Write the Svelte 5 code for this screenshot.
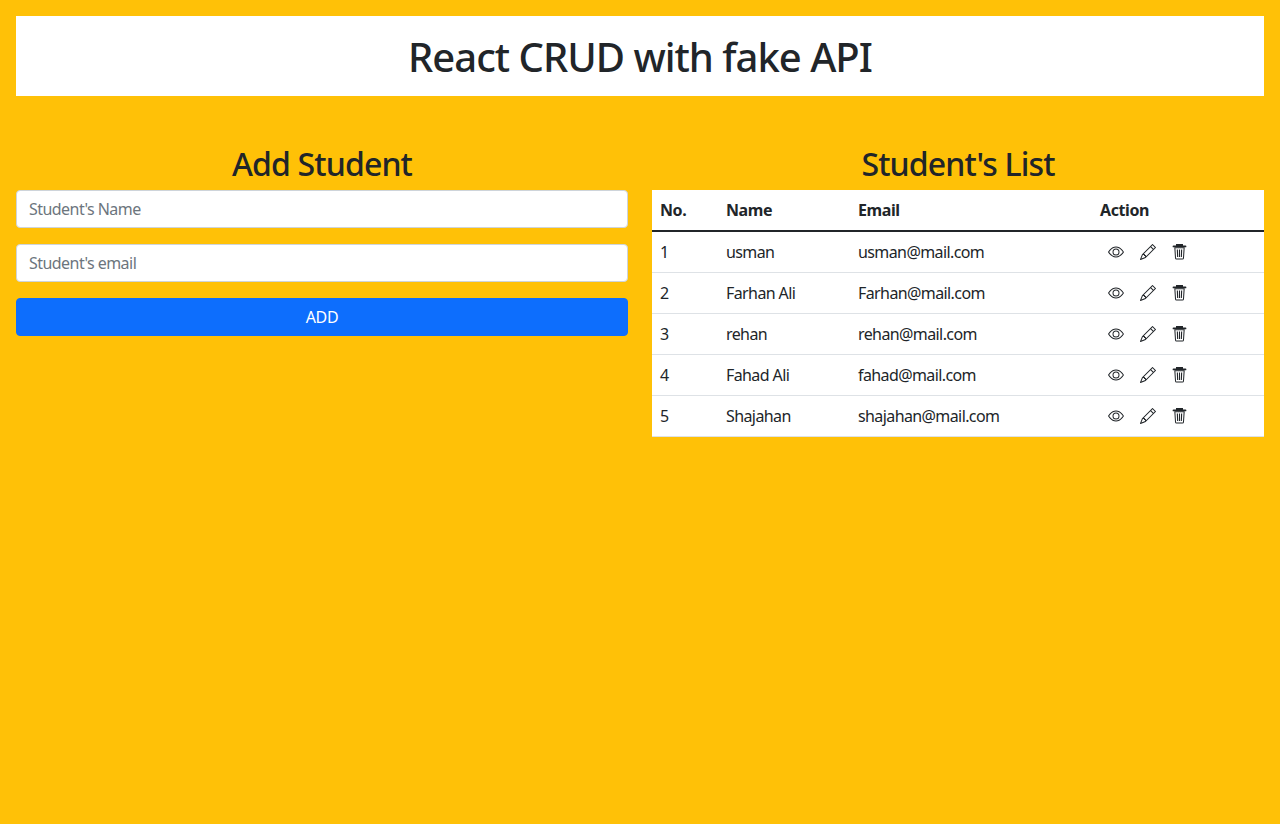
<script>
  const students = [
    { name: 'usman', email: 'usman@mail.com' },
    { name: 'Farhan Ali', email: 'Farhan@mail.com' },
    { name: 'rehan', email: 'rehan@mail.com' },
    { name: 'Fahad Ali', email: 'fahad@mail.com' },
    { name: 'Shajahan', email: 'shajahan@mail.com' }
  ]
</script>

<div class="page">
  <header class="banner"><h1>React CRUD with fake API</h1></header>

  <div class="columns">
    <section>
      <h2>Add Student</h2>
      <form class="form" on:submit|preventDefault>
        <input type="text" placeholder="Student's Name" />
        <input type="email" placeholder="Student's email" />
        <button type="submit">ADD</button>
      </form>
    </section>

    <section>
      <h2>Student's List</h2>
      <table>
        <thead>
          <tr>
            <th class="no">No.</th>
            <th class="name">Name</th>
            <th class="email">Email</th>
            <th>Action</th>
          </tr>
        </thead>
        <tbody>
          {#each students as s, i}
            <tr>
              <td>{i + 1}</td>
              <td>{s.name}</td>
              <td>{s.email}</td>
              <td>
                <div class="actions">
                  <svg viewBox="0 0 16 16" fill="currentColor">
                    <path d="M16 8s-3-5.500-8-5.500S0 8 0 8s3 5.500 8 5.500S16 8 16 8zM1.173 8a13.133 13.133 0 0 1 1.660-2.043C4.120 4.668 5.880 3.500 8 3.500c2.120 0 3.879 1.168 5.168 2.457A13.133 13.133 0 0 1 14.828 8c-.058.087-.122.183-.195.288-.335.480-.830 1.120-1.465 1.755C11.879 11.332 10.119 12.500 8 12.500c-2.120 0-3.879-1.168-5.168-2.457A13.134 13.134 0 0 1 1.172 8z" />
                    <path d="M8 5.500a2.500 2.500 0 1 0 0 5 2.500 2.500 0 0 0 0-5zM4.500 8a3.500 3.500 0 1 1 7 0 3.500 3.500 0 0 1-7 0z" />
                  </svg>
                  <svg viewBox="0 0 16 16" fill="currentColor">
                    <path d="M12.146.146a.5.5 0 0 1 .708 0l3 3a.5.5 0 0 1 0 .708l-10 10a.5.5 0 0 1-.168.11l-5 2a.5.5 0 0 1-.65-.65l2-5a.5.5 0 0 1 .11-.168l10-10zM11.207 2.500 13.500 4.793 14.793 3.500 12.500 1.207 11.207 2.500zm1.586 3L10.500 3.207 4 9.707V10h.5a.5.5 0 0 1 .5.5v.5h.5a.5.5 0 0 1 .5.5v.5h.293l6.500-6.500zm-9.761 5.175-.106.106-1.528 3.821 3.821-1.528.106-.106A.5.5 0 0 1 5 12.500V12h-.5a.5.5 0 0 1-.5-.5V11h-.5a.5.5 0 0 1-.468-.325z" />
                  </svg>
                  <svg viewBox="0.5 0.5 16 16" fill="currentColor">
                    <path d="M5.500 0h5a1 1 0 0 1 1 1v1H14a.9.9 0 0 1 0 1.800H2a.9.9 0 0 1 0-1.800H4.500V1a1 1 0 0 1 1-1Z" />
                    <path d="M2.800 3.800h10.400l-.7 10.700A1.600 1.600 0 0 1 10.900 16H5.100a1.600 1.600 0 0 1-1.600-1.500L2.800 3.800Zm1.100 1 .6 9.600a.6.6 0 0 0 .6.600h5.800a.6.6 0 0 0 .6-.6l.6-9.600H3.900Z" />
                    <path d="M5.300 6h1.100l.3 7.500h-1.100L5.300 6Zm2.150 0h1.100v7.500h-1.100V6Zm2.150 0h1.100l-.3 7.500h-1.100l.3-7.500Z" />
                  </svg>
                </div>
              </td>
            </tr>
          {/each}
        </tbody>
      </table>
    </section>
  </div>
</div>

<style>
  :global(body) {
    margin: 0;
    background: #ffc107;
    color: #212529;
    font-family: "Noto Sans", "Open Sans", sans-serif;
    font-size: 16px;
    line-height: 1.5;
  }

  .page {
    padding: 16px;
  }

  .banner {
    background: #fff;
    padding: 17px 16px 15px;
    margin-bottom: 48px;
  }

  h1 {
    margin: 0;
    font-size: 40px;
    font-weight: 500;
    line-height: 48px;
    text-align: center;
    letter-spacing: -1px;
  }

  .columns {
    display: grid;
    grid-template-columns: 1fr 1fr;
    gap: 24px;
  }

  h2 {
    margin: 0 0 8px;
    padding-top: 1px;
    font-size: 32px;
    font-weight: 500;
    line-height: 37px;
    text-align: center;
    letter-spacing: -.85px;
  }

  .form {
    display: flex;
    flex-direction: column;
    gap: 16px;
  }

  input {
    box-sizing: border-box;
    height: 38px;
    padding: 6px 12px;
    border: 1px solid #ced4da;
    border-radius: 4px;
    background: #fff;
    color: #212529;
    font: inherit;
    letter-spacing: -.55px;
    outline: none;
  }

  input::placeholder {
    color: #6c757d;
    opacity: 1;
  }

  button {
    height: 38px;
    border: 1px solid #0d6efd;
    border-radius: 4px;
    background: #0d6efd;
    color: #fff;
    font: inherit;
    letter-spacing: -.4px;
  }

  table {
    width: 100%;
    border-collapse: collapse;
    background: #fff;
    letter-spacing: -.6px;
  }

  th {
    height: 41px;
    padding: 0 8px;
    box-sizing: border-box;
    text-align: left;
    font-weight: 700;
    letter-spacing: -.4px;
    border-bottom: 2px solid #212529;
  }

  .no { width: 66px; }
  .name { width: 132px; }
  .email { width: 242px; }

  td {
    height: 41px;
    padding: 0 8px;
    box-sizing: border-box;
    border-bottom: 1px solid #dee2e6;
  }

  .actions {
    display: flex;
    gap: 16px;
    padding-left: 8px;
  }

  svg {
    width: 16px;
    height: 16px;
    flex: none;
  }
</style>
